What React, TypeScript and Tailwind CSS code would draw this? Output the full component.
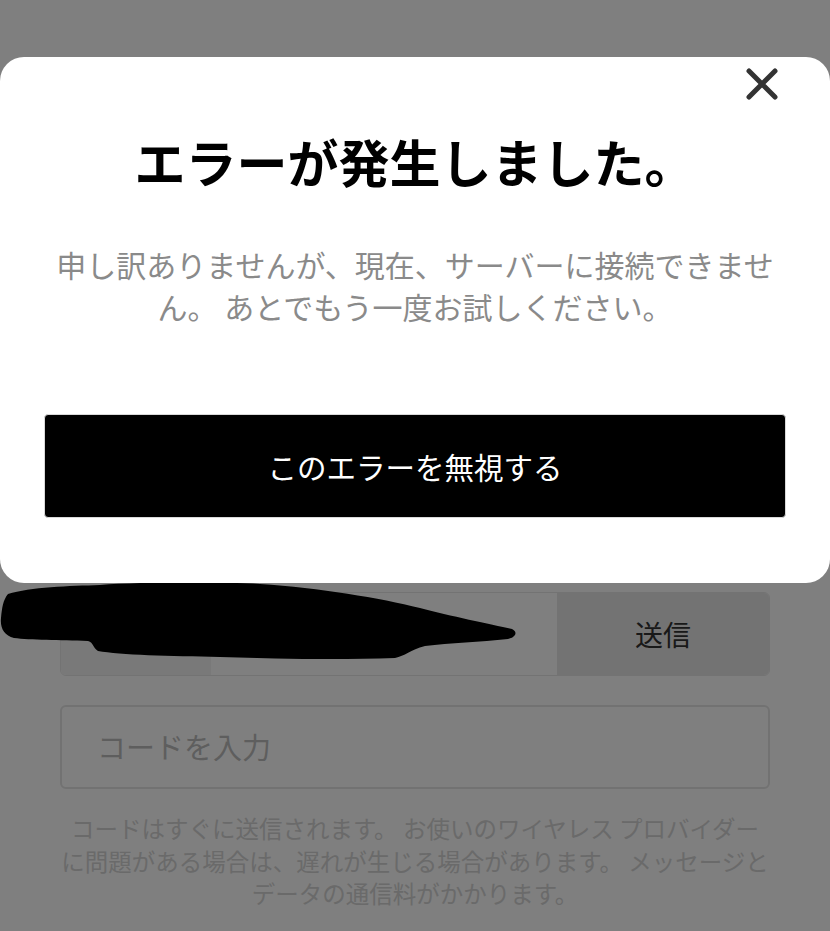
import React from "react";

const jp = "font-['Noto_Sans_CJK_JP','Noto_Sans',sans-serif]";

function CloseIcon() {
  return (
    <svg width="32" height="32" viewBox="0 0 32 32" fill="none">
      <path d="M3 3 L29 29 M29 3 L3 29" stroke="#333333" strokeWidth="5" strokeLinecap="round" />
    </svg>
  );
}

function Redaction() {
  return (
    <svg
      className="absolute left-0 top-[580px] z-20"
      width="520"
      height="85"
      viewBox="0 580 520 85"
    >
      <path
        d="M8 594 C30 587 70 586 100 585 C140 582 220 582 260 584 C320 588 380 598 420 608 C450 616 490 624 512 629 C518 632 516 637 508 639 C480 642 450 643 425 646 C410 650 405 656 395 658 C340 660 280 659 220 657 C170 656 120 655 98 651 C92 647 94 643 88 641 C60 640 30 640 14 638 C4 635 0 628 1 618 C2 608 3 600 8 594 Z"
        fill="#000"
      />
    </svg>
  );
}

export default function App() {
  return (
    <div className={`relative min-h-screen bg-white ${jp}`}>
      {/* Page behind the dialog */}
      <main className="px-[60px] pt-[592px]">
        <div className="flex h-[84px] overflow-hidden rounded-[6px] border border-[#e6e6e6]">
          <div className="w-[150px] bg-[#f3f3f3]"></div>
          <div className="flex-1 bg-white"></div>
          <button className="w-[212px] bg-[#e7e7e7] text-[28px] text-[#333]">送信</button>
        </div>
        <div className="mt-[29px] flex h-[84px] items-center rounded-[6px] border-2 border-[#e4e4e4] px-[35px]">
          <span className="text-[29px] text-[#bdbdbd]">コードを入力</span>
        </div>
        <p className="mt-[23px] text-center text-[23.5px] leading-[32.5px] text-[#d4d4d4]">
          コードはすぐに送信されます。 お使いのワイヤレス プロバイダー
          <br />
          に問題がある場合は、遅れが生じる場合があります。 メッセージと
          <br />
          データの通信料がかかります。
        </p>
      </main>

      {/* Dim overlay */}
      <div className="fixed inset-0 z-10 bg-black/50"></div>

      <Redaction />

      {/* Dialog */}
      <div className="absolute left-0 right-0 top-[57px] z-30 rounded-[24px] bg-white px-[44px] pb-[65px] pt-[74px]">
        <button className="absolute right-[52px] top-[11px] p-0">
          <CloseIcon />
        </button>
        <h1 className="whitespace-nowrap text-center text-[51px] font-bold leading-[60px] text-black">
          エラーが発生しました。
        </h1>
        <p className="mt-[52px] px-[6px] text-center text-[30px] leading-[42px] text-[#8a8a8a]">
          申し訳ありませんが、現在、サーバーに接続できませ
          <br />
          ん。 あとでもう一度お試しください。
        </p>
        <button className="mt-[87px] flex h-[104px] w-full items-center justify-center rounded-[4px] border border-[#d9d9d9] bg-black text-[29.5px] text-white">
          このエラーを無視する
        </button>
      </div>
    </div>
  );
}
